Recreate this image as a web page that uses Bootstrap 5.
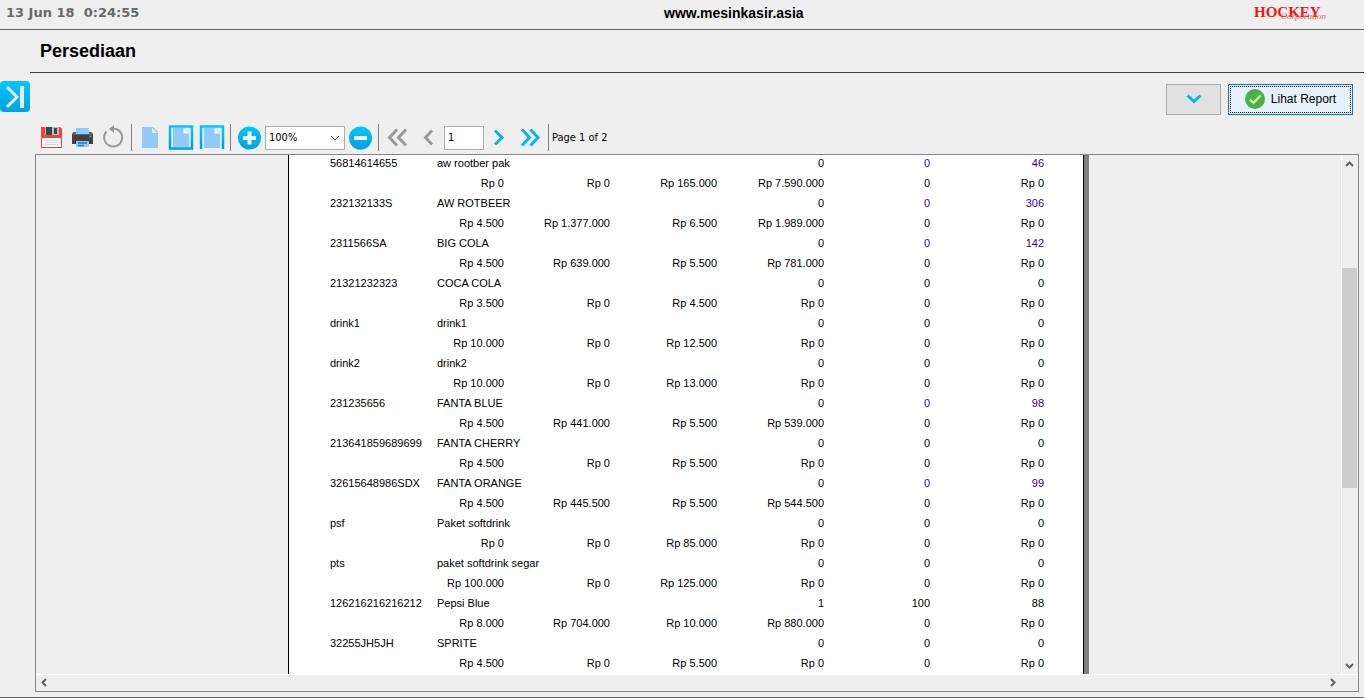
<!DOCTYPE html>
<html lang="id">
<head>
<meta charset="utf-8">
<meta name="viewport" content="width=device-width, initial-scale=1">
<title>Persediaan</title>
<link href="https://cdn.jsdelivr.net/npm/bootstrap@5.3.0/dist/css/bootstrap.min.css" rel="stylesheet">
<style>
  body { font-family: "Liberation Sans", Arial, sans-serif; color: #000; background: #fff; }
  .app { background: #efefef; margin-right: 2px; border-bottom: 1px solid #696969; padding-bottom: 5px; }
  .topbar { height: 30px; border-bottom: 1px solid #696969; padding: 0 34px 3px 6px; }
  .clock { flex: 5 0 0; font: bold 13px/18px "DejaVu Sans", sans-serif; color: #696969; white-space: pre; }
  .brand { flex: 4 0 0; }
  .site { font-size: 14px; line-height: 18px; color: #000; }
  .page-head { height: 43px; margin-left: 30px; padding-left: 10px; border-bottom: 1px solid #404040; }
  .page-head h1 { font-size: 18px; line-height: 42px; }
  .action-row { height: 49px; padding: 8px 11px 0 0; }
  .side-toggle { width: 30px; height: 31px; border-radius: 4px; background: linear-gradient(#00c8fc, #00a0dc); }
  .btn-drop, .btn-report { height: 31px; margin-top: 3px; border-radius: 0; font-size: 12px; }
  .btn-drop { width: 55px; margin-right: 7px; background: #e1e1e1; border: 1px solid #adadad; }
  .btn-report { width: 125px; background: #e5f1fb; border: 1px solid #0078d7; color: #000; outline: 1px dotted #000; outline-offset: -3px; }
  .tools { height: 32px; margin-left: 35px; padding-left: 1px; font: 11px/16px "DejaVu Sans Condensed", "DejaVu Sans", sans-serif; font-stretch: condensed; }
  .tool { width: 31px; height: 31px; flex: none; }
  .divider { width: 1px; height: 27px; margin: 0 3px 0 2px; background: #808080; }
  .field { height: 24px; border: 1px solid #adadad; border-radius: 0; background: #fff; font: inherit; color: #000; padding: 0 3px; }
  .zoom-pick { width: 80px; appearance: none; background: #fff url("data:image/svg+xml,%3Csvg xmlns='http://www.w3.org/2000/svg' width='10' height='6'%3E%3Cpath d='M1 1l4 4 4-4' fill='none' stroke='%23555'/%3E%3C/svg%3E") no-repeat right 4px center; }
  .page-no { width: 40px; }
  .viewer { margin: 0 5px 0 35px; border: 1px solid #828790; min-height: 0; }
  .stage { min-height: 0; }
  .paper { width: 801px; background: #fff; border-left: 1px solid #000; border-right: 5px solid #808080; }
  .paper-edge { border-right: 1px solid #000; padding-left: 41px; }
  .stock { width: 714px; table-layout: fixed; border-collapse: collapse; font-size: 11px; }
  .stock td { height: 20px; padding: 0 0 4px; line-height: 16px; white-space: nowrap; text-align: right; }
  .stock td.txt { text-align: left; }
  .stock .hot { color: #330099; }
  .vbar { width: 17px; border-left: 1px solid #fff; }
  .hbar { height: 17px; border-top: 1px solid #fff; padding: 0 21px 0 4px; }
  .thumb { width: 15px; flex: 220 0 0; background: #cdcdcd; }
  .before { flex: 96 0 0; }
  .after { flex: 169 0 0; }
  .arrow { height: 17px; width: 15px; flex: none; }
</style>
</head>
<body>
<div class="app vh-100 d-flex flex-column overflow-hidden">
  <header class="topbar d-flex align-items-center">
    <div class="clock">13 Jun 18  0:24:55</div>
    <div class="fw-bold site">www.mesinkasir.asia</div>
    <div class="brand d-flex justify-content-end">
      <svg width="76" height="22" role="img" aria-label="Hockey Corporation">
        <text x="0" y="15" font-family="Liberation Serif, serif" font-weight="bold" font-size="15" fill="#f01818">HOCKEY</text>
        <text x="27" y="17" font-family="Liberation Serif, serif" font-style="italic" font-size="9" fill="#e86060">Corporation</text>
      </svg>
    </div>
  </header>
  <div class="page-head"><h1 class="fw-bold m-0">Persediaan</h1></div>
  <div class="action-row d-flex align-items-start">
    <button class="side-toggle border-0 p-0 d-flex" type="button" aria-label="Buka menu">
      <svg width="30" height="31" fill="none" stroke="#e8f0f4"><path d="M7 6l10 10L7 26" stroke-width="3"/><path d="M22 5v22" stroke-width="4"/></svg>
    </button>
    <div class="d-flex ms-auto">
      <button class="btn btn-drop p-0 d-flex align-items-center justify-content-center" type="button" aria-label="Filter">
        <svg width="16" height="10"><path d="M1.500 1.500l6.500 6 6.500-6" fill="none" stroke="#06b4ee" stroke-width="3"/></svg>
      </button>
      <button class="btn btn-report p-0 d-flex align-items-center justify-content-center" type="button">
        <svg class="me-1" width="22" height="20"><circle cx="10" cy="10" r="10" fill="#4caf50"/><path d="M5 10.500l3.500 3.500 7-7.500" fill="none" stroke="#ccff90" stroke-width="2.200"/></svg>Lihat Report
      </button>
    </div>
  </div>
  <div class="tools d-flex align-items-center" role="toolbar" aria-label="Laporan">
    <svg width="0" height="0" class="position-absolute"><defs><linearGradient id="sky" x2="0" y2="1"><stop stop-color="#00c8fc"/><stop offset="1" stop-color="#00a0dc"/></linearGradient></defs></svg>
    <button class="tool btn border-0 p-0 d-flex" type="button" aria-label="Simpan">
      <svg width="31" height="31"><path d="M5 5h19l2 2v19H5z" fill="#f44336"/><path d="M9 5h14v8H9z" fill="#b0bec5"/><path d="M10 5h6v8h-6z" fill="#37474f"/><path d="M18 6h3v6h-3z" fill="#37474f"/><path d="M6 16h19v9H6z" fill="#fff"/><path d="M9 18.500h13M9 20.500h13M9 22.500h13" stroke="#cfd8dc"/></svg>
    </button>
    <button class="tool btn border-0 p-0 d-flex" type="button" aria-label="Cetak">
      <svg width="31" height="31"><path d="M5 13q0-3 3-3h15q3 0 3 3v9H5z" fill="#424242"/><path d="M7 10h17l2 3H5z" fill="#616161"/><path d="M9 6h13v6H9z" fill="#90caf9"/><circle cx="23.500" cy="14.500" r="1" fill="#00e676"/><path d="M8 19h15v2H8z" fill="#242424"/><path d="M9 19h13v6H9z" fill="#90caf9"/><path d="M11 21h9M11 23.500h6" stroke="#1976d2" stroke-width="1.500"/></svg>
    </button>
    <button class="tool btn border-0 p-0 d-flex" type="button" aria-label="Muat ulang">
      <svg width="31" height="31"><path d="M8.500 9.500A9 9 0 1 0 15 6.500" fill="none" stroke="#999" stroke-width="2"/><path d="M11 7l5-4v8z" fill="#999"/></svg>
    </button>
    <span class="divider"></span>
    <button class="tool btn border-0 p-0 d-flex" type="button" aria-label="Ukuran asli">
      <svg width="31" height="31"><path d="M7 5h11l5 5v16H7z" fill="#90caf9"/><path d="M17 6v5h5z" fill="#e1f5fe"/></svg>
    </button>
    <button class="tool btn border-0 p-0 d-flex" type="button" aria-label="Muat halaman">
      <svg width="31" height="31"><path d="M4 4.500h22v22H4z" fill="#e6eef3" stroke="url(#sky)" stroke-width="2.500"/><path d="M7 6h11l5 5v14H7z" fill="#90caf9"/><path d="M17.500 6v5.500H23z" fill="#f4fbff"/></svg>
    </button>
    <button class="tool btn border-0 p-0 d-flex" type="button" aria-label="Muat lebar">
      <svg width="31" height="31"><path d="M4 27V4.500h22V27" fill="#e6eef3" stroke="url(#sky)" stroke-width="2.500"/><path d="M7 6h11l5 5v15H7z" fill="#90caf9"/><path d="M17.500 6v5.500H23z" fill="#f4fbff"/></svg>
    </button>
    <span class="divider"></span>
    <button class="tool btn border-0 p-0 d-flex" type="button" aria-label="Perbesar">
      <svg width="31" height="31"><circle cx="15.500" cy="16" r="11.500" fill="url(#sky)"/><path d="M15.500 9.500v13M9 16h13" stroke="#f4fafc" stroke-width="4"/></svg>
    </button>
    <select class="field zoom-pick" aria-label="Perbesaran"><option>100%</option><option>150%</option></select>
    <button class="tool btn border-0 p-0 d-flex" type="button" aria-label="Perkecil">
      <svg width="31" height="31"><circle cx="15.500" cy="16" r="11.500" fill="url(#sky)"/><path d="M9 16h13" stroke="#f4fafc" stroke-width="4"/></svg>
    </button>
    <span class="divider"></span>
    <button class="tool btn border-0 p-0 d-flex" type="button" aria-label="Halaman pertama">
      <svg width="31" height="31" fill="none" stroke="#999" stroke-width="3"><path d="M15 7.500L7.500 15.500 15 23.500M24 7.500L16.500 15.500 24 23.500"/></svg>
    </button>
    <button class="tool btn border-0 p-0 d-flex" type="button" aria-label="Sebelumnya">
      <svg width="31" height="31" fill="none" stroke="#999" stroke-width="3"><path d="M19 8.500L12.500 15.500l6.500 7"/></svg>
    </button>
    <input class="field page-no" type="text" value="1" aria-label="Nomor halaman">
    <button class="tool btn border-0 p-0 d-flex" type="button" aria-label="Berikutnya">
      <svg width="31" height="31" fill="none" stroke="#06b4ee" stroke-width="3"><path d="M11 8.500l7 7-7 7"/></svg>
    </button>
    <button class="tool btn border-0 p-0 d-flex" type="button" aria-label="Halaman terakhir">
      <svg width="31" height="31" fill="none" stroke="#06b4ee" stroke-width="3"><path d="M7 7.500l7.500 8-7.500 8M15.500 7.500l7.500 8-7.500 8"/></svg>
    </button>
    <span class="divider"></span>
    <span>Page 1 of 2</span>
  </div>
  <main class="viewer flex-fill d-flex flex-column">
    <div class="stage d-flex flex-fill">
      <div class="flex-fill overflow-hidden">
        <div class="paper mx-auto">
          <div class="paper-edge">
            <table class="stock">
              <colgroup><col style="width:107px"><col style="width:67px"><col style="width:106px"><col style="width:107px"><col style="width:107px"><col style="width:106px"><col style="width:114px"></colgroup>
              <tbody>
                <tr><td class="txt">56814614655</td><td class="txt" colspan="3">aw rootber pak</td><td>0</td><td class="hot">0</td><td class="hot">46</td></tr>
                <tr><td></td><td>Rp 0</td><td>Rp 0</td><td>Rp 165.000</td><td>Rp 7.590.000</td><td>0</td><td>Rp 0</td></tr>
                <tr><td class="txt">232132133S</td><td class="txt" colspan="3">AW ROTBEER</td><td>0</td><td class="hot">0</td><td class="hot">306</td></tr>
                <tr><td></td><td>Rp 4.500</td><td>Rp 1.377.000</td><td>Rp 6.500</td><td>Rp 1.989.000</td><td>0</td><td>Rp 0</td></tr>
                <tr><td class="txt">2311566SA</td><td class="txt" colspan="3">BIG COLA</td><td>0</td><td class="hot">0</td><td class="hot">142</td></tr>
                <tr><td></td><td>Rp 4.500</td><td>Rp 639.000</td><td>Rp 5.500</td><td>Rp 781.000</td><td>0</td><td>Rp 0</td></tr>
                <tr><td class="txt">21321232323</td><td class="txt" colspan="3">COCA COLA</td><td>0</td><td>0</td><td>0</td></tr>
                <tr><td></td><td>Rp 3.500</td><td>Rp 0</td><td>Rp 4.500</td><td>Rp 0</td><td>0</td><td>Rp 0</td></tr>
                <tr><td class="txt">drink1</td><td class="txt" colspan="3">drink1</td><td>0</td><td>0</td><td>0</td></tr>
                <tr><td></td><td>Rp 10.000</td><td>Rp 0</td><td>Rp 12.500</td><td>Rp 0</td><td>0</td><td>Rp 0</td></tr>
                <tr><td class="txt">drink2</td><td class="txt" colspan="3">drink2</td><td>0</td><td>0</td><td>0</td></tr>
                <tr><td></td><td>Rp 10.000</td><td>Rp 0</td><td>Rp 13.000</td><td>Rp 0</td><td>0</td><td>Rp 0</td></tr>
                <tr><td class="txt">231235656</td><td class="txt" colspan="3">FANTA BLUE</td><td>0</td><td class="hot">0</td><td class="hot">98</td></tr>
                <tr><td></td><td>Rp 4.500</td><td>Rp 441.000</td><td>Rp 5.500</td><td>Rp 539.000</td><td>0</td><td>Rp 0</td></tr>
                <tr><td class="txt">213641859689699</td><td class="txt" colspan="3">FANTA CHERRY</td><td>0</td><td>0</td><td>0</td></tr>
                <tr><td></td><td>Rp 4.500</td><td>Rp 0</td><td>Rp 5.500</td><td>Rp 0</td><td>0</td><td>Rp 0</td></tr>
                <tr><td class="txt">32615648986SDX</td><td class="txt" colspan="3">FANTA ORANGE</td><td>0</td><td class="hot">0</td><td class="hot">99</td></tr>
                <tr><td></td><td>Rp 4.500</td><td>Rp 445.500</td><td>Rp 5.500</td><td>Rp 544.500</td><td>0</td><td>Rp 0</td></tr>
                <tr><td class="txt">psf</td><td class="txt" colspan="3">Paket softdrink</td><td>0</td><td>0</td><td>0</td></tr>
                <tr><td></td><td>Rp 0</td><td>Rp 0</td><td>Rp 85.000</td><td>Rp 0</td><td>0</td><td>Rp 0</td></tr>
                <tr><td class="txt">pts</td><td class="txt" colspan="3">paket softdrink segar</td><td>0</td><td>0</td><td>0</td></tr>
                <tr><td></td><td>Rp 100.000</td><td>Rp 0</td><td>Rp 125.000</td><td>Rp 0</td><td>0</td><td>Rp 0</td></tr>
                <tr><td class="txt">126216216216212</td><td class="txt" colspan="3">Pepsi Blue</td><td>1</td><td>100</td><td>88</td></tr>
                <tr><td></td><td>Rp 8.000</td><td>Rp 704.000</td><td>Rp 10.000</td><td>Rp 880.000</td><td>0</td><td>Rp 0</td></tr>
                <tr><td class="txt">32255JH5JH</td><td class="txt" colspan="3">SPRITE</td><td>0</td><td>0</td><td>0</td></tr>
                <tr><td></td><td>Rp 4.500</td><td>Rp 0</td><td>Rp 5.500</td><td>Rp 0</td><td>0</td><td>Rp 0</td></tr>
              </tbody>
            </table>
          </div>
        </div>
      </div>
      <div class="vbar d-flex flex-column" aria-hidden="true">
        <svg class="arrow" fill="none" stroke="#606060" stroke-width="2"><path d="M4 11l3.500-3.500L11 11"/></svg>
        <div class="before"></div>
        <div class="thumb"></div>
        <div class="after"></div>
        <svg class="arrow" fill="none" stroke="#606060" stroke-width="2"><path d="M4 7l3.500 3.500L11 7"/></svg>
      </div>
    </div>
    <div class="hbar d-flex justify-content-between" aria-hidden="true">
      <svg class="arrow" fill="none" stroke="#606060" stroke-width="2"><path d="M6 4L2.500 7.500 6 11"/></svg>
      <svg class="arrow" fill="none" stroke="#606060" stroke-width="2"><path d="M9 4l3.500 3.500L9 11"/></svg>
    </div>
  </main>
</div>
<script src="https://cdn.jsdelivr.net/npm/bootstrap@5.3.0/dist/js/bootstrap.bundle.min.js"></script>
</body>
</html>
